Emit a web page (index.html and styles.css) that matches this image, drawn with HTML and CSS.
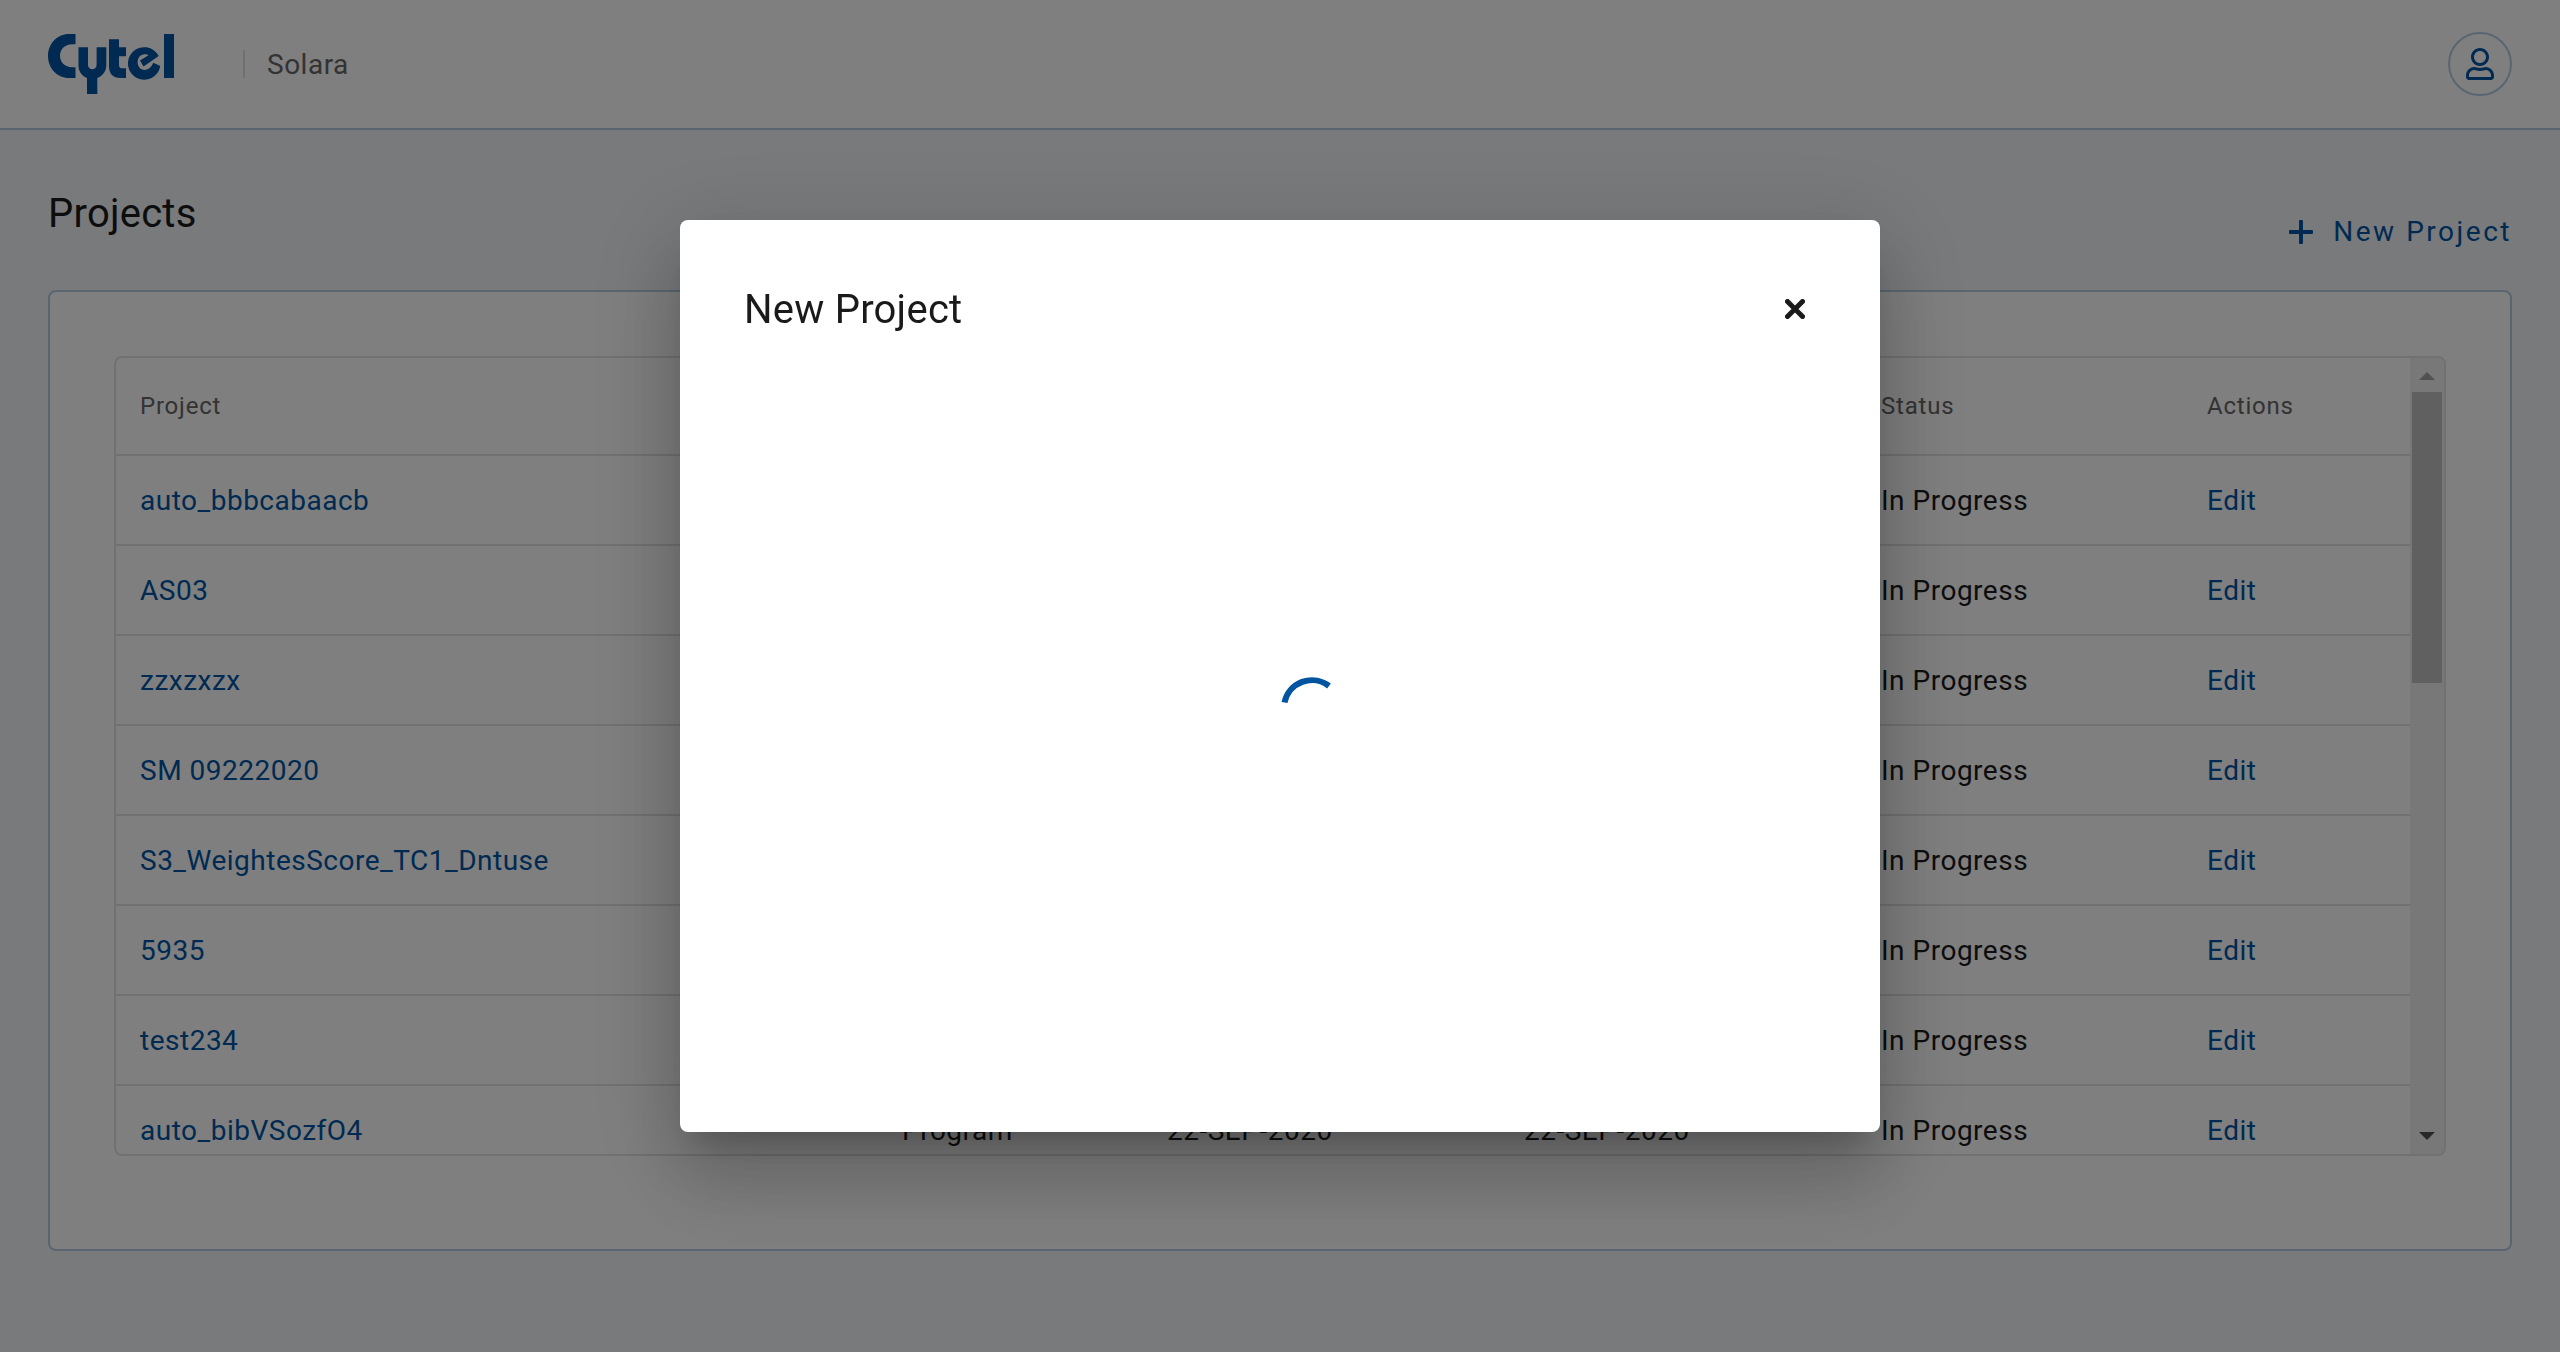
FILE: index.html
```html
<!DOCTYPE html>
<html lang="en">
<head>
<meta charset="utf-8">
<title>Solara - Projects</title>
<link rel="stylesheet" href="styles.css">
</head>
<body>
<header class="topbar">
  <a class="logo" href="#" aria-label="Cytel">
    <svg width="126" height="60" viewBox="0 0 126 60" fill="currentColor">
      <path d="M27.500 0H21C9 0 0 10 0 22s9 22 21 22h6.500V33.300H24c-7 0-12-5-12-11.500S17 10.300 24 10.300h3.500z"/>
      <path d="M30.500 13.300H40V31a4.300 4.300 0 0 0 8.600 0V13.300h9.700V31c0 6-3 10.500-9 13v16H39V44c-6-2.500-8.500-7-8.500-13z"/>
      <path d="M61 5.300h10v8h7v9h-7V31c0 2.500 1 3.300 3.300 3.300H78V44h-5.500C65 44 61 40 61 32z"/>
      <path d="M110.700 22A16.300 16.300 0 1 0 112.300 32l-7-3.200C103 34 100 36 96.500 36 87.500 36 87 20 97 20.300c1.500 0 2.700.4 3.500 1L92 26.500l3.500 6z"/>
      <path d="M116 0h10v44h-10z"/>
    </svg>
  </a>
  <span class="divider"></span>
  <span class="product">Solara</span>
  <button class="avatar" type="button" aria-label="Account">
    <svg width="28" height="32" viewBox="0 0 448 512" fill="currentColor"><path d="M313.600 304c-28.700 0-42.500 16-89.600 16-47.100 0-60.800-16-89.600-16C60.200 304 0 364.200 0 438.400V464c0 26.500 21.500 48 48 48h352c26.500 0 48-21.500 48-48v-25.600c0-74.200-60.200-134.400-134.400-134.400zM400 464H48v-25.600c0-47.600 38.800-86.400 86.400-86.400 14.600 0 38.300 16 89.600 16 51.700 0 74.900-16 89.600-16 47.600 0 86.400 38.800 86.400 86.400V464zM224 288c79.500 0 144-64.500 144-144S303.500 0 224 0 80 64.500 80 144s64.500 144 144 144zm0-240c52.900 0 96 43.100 96 96s-43.100 96-96 96-96-43.100-96-96 43.100-96 96-96z"/></svg>
  </button>
</header>

<main class="page">
  <div class="page-head">
    <h1 class="title">Projects</h1>
    <button class="new-project" type="button">
      <svg width="24" height="24" viewBox="0 0 24 24" fill="currentColor"><path d="M11 0h2a1 1 0 0 1 1 1v9h9a1 1 0 0 1 1 1v2a1 1 0 0 1-1 1h-9v9a1 1 0 0 1-1 1h-2a1 1 0 0 1-1-1v-9H1a1 1 0 0 1-1-1v-2a1 1 0 0 1 1-1h9V1a1 1 0 0 1 1-1z"/></svg>
      <span>New Project</span>
    </button>
  </div>

  <section class="card">
    <div class="table-box">
      <div class="table-view">
        <table class="projects">
          <colgroup><col><col class="col-type"><col class="col-date"><col class="col-date"><col class="col-status"><col class="col-actions"></colgroup>
          <thead>
            <tr><th>Project</th><th></th><th></th><th></th><th>Status</th><th>Actions</th></tr>
          </thead>
          <tbody>
            <tr><td><a href="#">auto_bbbcabaacb</a></td><td></td><td></td><td></td><td>In Progress</td><td><a href="#">Edit</a></td></tr>
            <tr><td><a href="#">AS03</a></td><td></td><td></td><td></td><td>In Progress</td><td><a href="#">Edit</a></td></tr>
            <tr><td><a href="#">zzxzxzx</a></td><td></td><td></td><td></td><td>In Progress</td><td><a href="#">Edit</a></td></tr>
            <tr><td><a href="#">SM 09222020</a></td><td></td><td></td><td></td><td>In Progress</td><td><a href="#">Edit</a></td></tr>
            <tr><td><a href="#">S3_WeightesScore_TC1_Dntuse</a></td><td></td><td></td><td></td><td>In Progress</td><td><a href="#">Edit</a></td></tr>
            <tr><td><a href="#">5935</a></td><td></td><td></td><td></td><td>In Progress</td><td><a href="#">Edit</a></td></tr>
            <tr><td><a href="#">test234</a></td><td></td><td></td><td></td><td>In Progress</td><td><a href="#">Edit</a></td></tr>
            <tr><td><a href="#">auto_bibVSozfO4</a></td><td>Program</td><td>22-SEP-2020</td><td>22-SEP-2020</td><td>In Progress</td><td><a href="#">Edit</a></td></tr>
          </tbody>
        </table>
      </div>
      <div class="scrollbar" aria-hidden="true">
        <svg class="arrow-up" width="16" height="8" viewBox="0 0 16 8" fill="currentColor"><path d="M8 0l8 8H0z"/></svg>
        <span class="thumb"></span>
        <svg class="arrow-down" width="16" height="8" viewBox="0 0 16 8" fill="currentColor"><path d="M0 0h16L8 8z"/></svg>
      </div>
    </div>
  </section>
</main>

<div class="backdrop">
  <div class="dialog" role="dialog" aria-modal="true" aria-labelledby="dialog-title">
    <div class="dialog-head">
      <h2 class="title" id="dialog-title">New Project</h2>
      <button class="close" type="button" aria-label="Close">
        <svg width="20" height="20" viewBox="0 0 20 20" fill="none" stroke="currentColor" stroke-width="5" stroke-linecap="round"><path d="M2.500 2.500l15 15M17.500 2.500l-15 15"/></svg>
      </button>
    </div>
    <div class="loading" role="status" aria-label="Loading">
      <svg width="64" height="64" viewBox="0 0 64 64" fill="none" stroke="currentColor" stroke-width="6"><path d="M5.500 26.500A28 28 0 0 1 50 10"/></svg>
    </div>
  </div>
</div>
</body>
</html>
```
FILE: styles.css
```css
* {
  box-sizing: border-box;
}

body {
  margin: 0;
  min-height: 100vh;
  display: flex;
  flex-direction: column;
  background: #f2f5f8;
  color: #1a1a1a;
  font: 28px/40px Roboto, "Liberation Sans", sans-serif;
  letter-spacing: 0.018em;
}

button {
  border: 0;
  padding: 0;
  background: none;
  font: inherit;
  cursor: pointer;
}

svg {
  display: block;
}

a {
  color: #0054a4;
  text-decoration: none;
}

.topbar {
  display: flex;
  align-items: center;
  height: 130px;
  padding: 0 48px;
  background: #fff;
  border-bottom: 2px solid #b3cce3;
}

.divider {
  width: 2px;
  height: 28px;
  margin: 0 22px 0 69px;
  background: #e1dfe2;
}

.product {
  padding-top: 2px;
  color: #666;
}

.avatar {
  display: flex;
  align-items: center;
  justify-content: center;
  width: 64px;
  height: 64px;
  margin-left: auto;
  border: 2px solid #b3cce3;
  border-radius: 50%;
  color: #0054a4;
}

.page {
  flex: 1;
  padding: 0 48px 48px;
}

.page-head {
  display: flex;
  justify-content: space-between;
  align-items: flex-start;
  height: 160px;
  padding-top: 58px;
}

.title {
  margin: 0;
  padding-top: 2px;
  font-size: 40px;
  line-height: 48px;
  font-weight: 400;
  letter-spacing: 0.006em;
}

.new-project {
  display: flex;
  align-items: center;
  gap: 20px;
  margin-top: 24px;
  color: #0054a4;
  letter-spacing: 0.09em;
}

.card {
  padding: 64px 64px 93px;
  background: #fff;
  border: 2px solid #b3cce3;
  border-radius: 8px;
}

.table-box {
  display: flex;
  height: 800px;
  border: 2px solid #e2e2e2;
  border-radius: 8px;
  overflow: hidden;
}

.table-view {
  flex: 1;
  overflow: hidden;
}

.projects {
  width: 100%;
  table-layout: fixed;
  border-collapse: separate;
  border-spacing: 0;
}

.col-type {
  width: 265px;
}

.col-date {
  width: 357px;
}

.col-status {
  width: 326px;
}

.col-actions {
  width: 227px;
}

.projects th,
.projects td {
  height: 90px;
  padding: 2px 24px 0;
  border-bottom: 2px solid #e2e2e2;
  text-align: left;
  white-space: nowrap;
}

.projects th {
  height: 98px;
  padding-top: 0;
  color: #666;
  font-size: 24px;
  font-weight: 400;
  letter-spacing: 0.033em;
}

.scrollbar {
  display: flex;
  flex-direction: column;
  align-items: center;
  width: 34px;
  padding: 14px 0;
  background: #f1f1f1;
}

.thumb {
  width: 30px;
  height: 291px;
  margin-top: 12px;
  background: #c1c1c1;
}

.arrow-up {
  color: #a3a3a3;
}

.arrow-down {
  margin-top: auto;
  color: #505050;
}

.backdrop {
  position: fixed;
  inset: 0;
  display: flex;
  align-items: center;
  justify-content: center;
  background: rgba(0, 0, 0, 0.5);
}

.dialog {
  display: flex;
  flex-direction: column;
  width: 1200px;
  max-width: 90%;
  height: 912px;
  max-height: 90%;
  padding: 64px;
  background: #fff;
  border-radius: 8px;
  box-shadow: 0 22px 30px -14px rgba(0, 0, 0, 0.2), 0 48px 76px 6px rgba(0, 0, 0, 0.14), 0 18px 92px 16px rgba(0, 0, 0, 0.12);
}

.dialog-head {
  display: flex;
  justify-content: space-between;
  align-items: center;
}

.close {
  padding: 11px;
  color: #1a1a1a;
}

.loading {
  display: flex;
  flex: 1;
  align-items: center;
  justify-content: center;
  padding: 14px 0 0 62px;
  color: #0054a0;
}
```
